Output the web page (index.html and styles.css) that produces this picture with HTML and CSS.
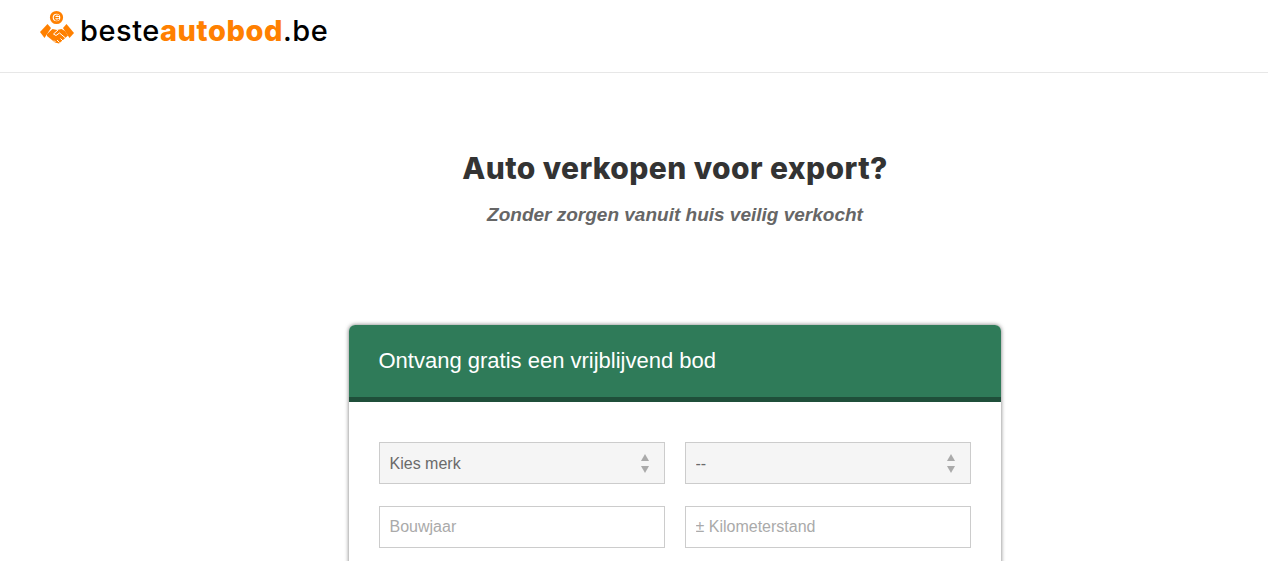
FILE: index.html
```html
<!doctype html>
<html lang="nl">
<head>
	<meta charset="UTF-8">
	<title>besteautobod.be</title>
	<link rel="stylesheet" href="styles.css">
</head>
<body>
	<header class="top">
		<a class="logo" href="#">
			<svg class="logo-icon" viewBox="0 0 36 36" width="36" height="36">
				<!-- munt -->
				<circle cx="16.500" cy="7.500" r="5.200" fill="none" stroke="#ff8000" stroke-width="2.800"/>
				<path d="M19 6a2.600 2.600 0 1 0 0 3.200M14.500 7.700h4.500" fill="none" stroke="#ff8000" stroke-width="1.200"/>
				<!-- manchetten -->
				<path d="M0 22L7.500 14L11 18L4.500 28Z" fill="#ff8000"/>
				<path d="M26.500 14L34 23L29.500 28L23 18Z" fill="#ff8000"/>
				<!-- handen -->
				<path d="M7 24L12.500 19L17 20L21.500 19L25 21L28 25.500L23 30L19 33.500L15 32.500L7 26Z" fill="#ff8000"/>
				<path d="M18 20L13.500 24L16 25.500L19.500 23L25.500 28M20.500 28.500L23 31M17 30L19.500 32.500M14 30.500L15.500 32" fill="none" stroke="#fff" stroke-width="1"/>
			</svg>
			<span class="logo-text">beste<b>autobod</b>.be</span>
		</a>
	</header>
	<main class="content">
		<h1>Auto verkopen voor export?</h1>
		<p class="sub">Zonder zorgen vanuit huis veilig verkocht</p>
		<form class="card">
			<h2>Ontvang gratis een vrijblijvend bod</h2>
			<div class="fields">
				<div class="select-box">
					<select><option>Kies merk</option></select>
					<span class="arrows"><i class="up"></i><i class="down"></i></span>
				</div>
				<div class="select-box">
					<select><option>--</option></select>
					<span class="arrows"><i class="up"></i><i class="down"></i></span>
				</div>
				<input type="text" placeholder="Bouwjaar">
				<input type="text" placeholder="± Kilometerstand">
			</div>
		</form>
	</main>
</body>
</html>
```

FILE: styles.css
```css
*{margin:0;padding:0;box-sizing:border-box;}
html,body{height:100%;overflow:hidden;}
body{background:#fff;font-family:"Liberation Sans",Arial,sans-serif;color:#333;}

.top{height:73px;border-bottom:1px solid #e7e7e7;padding:10px 0 0 40px;}
.logo{display:flex;align-items:flex-start;gap:4px;color:#000;text-decoration:none;}
.logo-icon{flex:none;}
.logo-text{font-family:Inter,"Noto Sans",sans-serif;font-size:29px;font-weight:500;line-height:42px;letter-spacing:.55px;}
.logo-text b{color:#ff8000;font-weight:800;}

.content{padding:75px 0 0 82px;display:flex;flex-direction:column;align-items:center;}
h1{font-family:Inter,"Noto Sans",sans-serif;font-size:30px;font-weight:800;line-height:40px;letter-spacing:.4px;color:#333;}
.sub{margin-top:16px;font-size:19px;font-weight:700;font-style:italic;line-height:22px;color:#666;}

.card{width:652px;margin-top:99px;padding-bottom:60px;background:#fff;border-radius:6px;box-shadow:0 0 4px rgba(0,0,0,.55);}
.card h2{height:77px;padding:22px 29.500px 0;background:#2f7b59;border-bottom:5px solid #1f4f3a;border-radius:6px 6px 0 0;font-size:22px;font-weight:400;line-height:28px;color:#fff;}

.fields{display:grid;grid-template-columns:286px 286px;gap:22px 20px;padding:40px 30px 0;}
.select-box{position:relative;}
select,input{display:block;width:100%;height:42px;padding:0 9.500px;border:1px solid #ccc;border-radius:0;font-family:inherit;font-size:16px;color:#6a6a6a;outline:none;}
select{appearance:none;background:#f5f5f5;}
input{background:#fff;}
input::placeholder{color:#aaa;opacity:1;}

/* pijltjes over de select */
.arrows{position:absolute;top:12px;right:16px;display:flex;flex-direction:column;gap:5px;}
.arrows i{display:block;width:0;height:0;border-left:4px solid transparent;border-right:4px solid transparent;}
.arrows .up{border-bottom:7px solid #aaa;}
.arrows .down{border-top:7px solid #aaa;}
```
